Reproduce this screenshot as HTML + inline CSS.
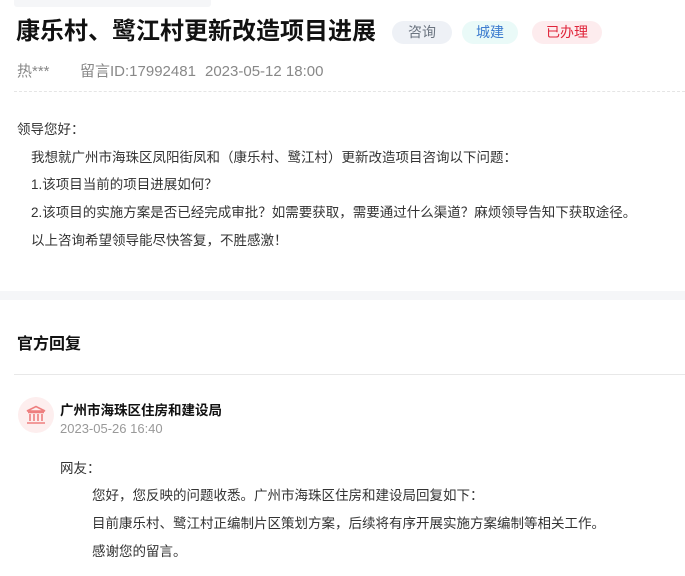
<!DOCTYPE html><html><head><meta charset="utf-8"><style>
body{margin:0;width:685px;height:576px;background:#fff;font-family:"Liberation Sans","Noto Sans CJK SC",sans-serif;position:relative;overflow:hidden}
.a{position:absolute;white-space:nowrap}
.tag{position:absolute;top:21px;height:23px;line-height:23px;border-radius:12px;font-size:14px;text-align:center}
.p{font-size:13.5px;color:#333}
</style></head><body>
<div class="a" style="left:14px;top:0;width:197px;height:7px;background:#f5f6f8;border-radius:0 0 3px 3px"></div>
<div class="a" style="left:16px;top:14px;font-size:24px;font-weight:bold;color:#111;line-height:36px">康乐村、鹭江村更新改造项目进展</div>
<div class="tag" style="left:392px;width:60px;background:#eef1f6;color:#6b7480">咨询</div>
<div class="tag" style="left:462px;width:56px;background:#eafaf8;color:#3d7ccf">城建</div>
<div class="tag" style="left:532px;width:70px;background:#fdecee;color:#e0243a">已办理</div>
<div class="a" style="left:17px;top:62px;font-size:15px;color:#888;line-height:20px"><span style="display:inline-block;width:63px">热***</span><span style="display:inline-block;width:125px">留言ID:17992481</span><span>2023-05-12 18:00</span></div>
<div class="a" style="left:14px;top:91px;width:671px;border-top:1px dashed #e5e5e5"></div>
<div class="a p" style="left:17px;top:118px">领导您好：</div>
<div class="a p" style="left:31px;top:146px">我想就广州市海珠区凤阳街凤和（康乐村、鹭江村）更新改造项目咨询以下问题：</div>
<div class="a p" style="left:31px;top:173px">1.该项目当前的项目进展如何？</div>
<div class="a p" style="left:31px;top:201px">2.该项目的实施方案是否已经完成审批？如需要获取，需要通过什么渠道？麻烦领导告知下获取途径。</div>
<div class="a p" style="left:31px;top:229px">以上咨询希望领导能尽快答复，不胜感激！</div>
<div class="a" style="left:0;top:291px;width:685px;height:9px;background:#f5f6f8"></div>
<div class="a" style="left:17px;top:330px;font-size:16px;font-weight:bold;color:#111">官方回复</div>
<div class="a" style="left:14px;top:374px;width:671px;border-top:1px solid #e8e8e8"></div>
<div class="a" style="left:18px;top:397px;width:36px;height:36px;border-radius:50%;background:#fdeeee"></div>
<svg class="a" style="left:25px;top:405px" width="22" height="20" viewBox="0 0 22 20" fill="none" stroke="#ee7f7f" stroke-width="1.6"><path d="M2 6 L11 1.5 L20 6 Z M3 7.5h16 M5 9v7 M9 9v7 M13 9v7 M17 9v7 M2 18h18"/></svg>
<div class="a" style="left:60px;top:399px;font-size:13.5px;font-weight:bold;color:#111">广州市海珠区住房和建设局</div>
<div class="a" style="left:60px;top:421px;font-size:13px;color:#999">2023-05-26 16:40</div>
<div class="a p" style="left:60px;top:457px">网友：</div>
<div class="a p" style="left:92px;top:484px">您好，您反映的问题收悉。广州市海珠区住房和建设局回复如下：</div>
<div class="a p" style="left:92px;top:512px">目前康乐村、鹭江村正编制片区策划方案，后续将有序开展实施方案编制等相关工作。</div>
<div class="a p" style="left:92px;top:540px">感谢您的留言。</div>
</body></html>
